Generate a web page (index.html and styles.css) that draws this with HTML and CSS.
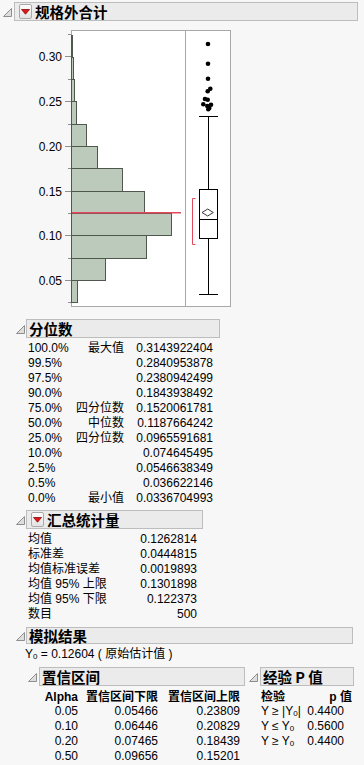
FILE: index.html
```html
<!doctype html>
<html lang="zh-CN">
  <head>
    <meta charset="UTF-8" />
    <meta name="viewport" content="width=device-width, initial-scale=1.0" />
    <title>规格外合计</title>
    <link rel="stylesheet" href="styles.css">
  </head>
  <body>
    <div class="report">
      <!-- 顶层报告 -->
      <div class="outline-row row-top">
        <svg class="disclosure" viewBox="0 0 9 9"><polygon points="0.5,8.5 8.5,0.5 8.5,8.5" /></svg>
        <div class="outline-head head-top">
          <span class="menu-btn"><svg viewBox="0 0 9 6"><polygon points="0.5,0.5 8.5,0.5 4.5,5.2" /></svg></span>
          <span>规格外合计</span>
        </div>
      </div>

      <svg class="dist-chart" width="240" height="293" viewBox="0 21 240 293">
        <rect class="frame" x="71.5" y="30.5" width="159" height="276" />
        <line class="frame" x1="185.5" y1="30.5" x2="185.5" y2="306.5" />

        <g class="bars">
          <rect x="71.5" y="35.5" width="1" height="22" />
          <rect x="71.5" y="57.5" width="2" height="22" />
          <rect x="71.5" y="79.5" width="3" height="22" />
          <rect x="71.5" y="101.5" width="5" height="23" />
          <rect x="71.5" y="124.5" width="15" height="22" />
          <rect x="71.5" y="146.5" width="26" height="22" />
          <rect x="71.5" y="168.5" width="51" height="23" />
          <rect x="71.5" y="191.5" width="73" height="22" />
          <rect x="71.5" y="213.5" width="100" height="22" />
          <rect x="71.5" y="235.5" width="75" height="23" />
          <rect x="71.5" y="258.5" width="34" height="22" />
          <rect x="71.5" y="280.5" width="6" height="22" />
        </g>
        <line class="mean" x1="72" y1="212.8" x2="181" y2="212.8" />

        <g class="ticks">
          <line x1="65" y1="56.5" x2="71" y2="56.5" />
          <line x1="65" y1="101.5" x2="71" y2="101.5" />
          <line x1="65" y1="146.5" x2="71" y2="146.5" />
          <line x1="65" y1="191.5" x2="71" y2="191.5" />
          <line x1="65" y1="235.5" x2="71" y2="235.5" />
          <line x1="65" y1="280.5" x2="71" y2="280.5" />
          <line x1="68" y1="34.5" x2="71" y2="34.5" />
          <line x1="68" y1="79.5" x2="71" y2="79.5" />
          <line x1="68" y1="124.5" x2="71" y2="124.5" />
          <line x1="68" y1="168.5" x2="71" y2="168.5" />
          <line x1="68" y1="213.5" x2="71" y2="213.5" />
          <line x1="68" y1="258.5" x2="71" y2="258.5" />
          <line x1="68" y1="302.5" x2="71" y2="302.5" />
        </g>
        <g class="tick-labels">
          <text x="62" y="61">0.30</text>
          <text x="62" y="106">0.25</text>
          <text x="62" y="151">0.20</text>
          <text x="62" y="196">0.15</text>
          <text x="62" y="240">0.10</text>
          <text x="62" y="285">0.05</text>
        </g>

        <!-- 箱线图 -->
        <g class="box">
          <line x1="208.5" y1="116.5" x2="208.5" y2="189.5" />
          <line x1="208.5" y1="238.5" x2="208.5" y2="294.5" />
          <line x1="199" y1="116.5" x2="218" y2="116.5" />
          <line x1="199" y1="294.5" x2="218" y2="294.5" />
          <rect x="199.5" y="189.5" width="18" height="49" />
          <line x1="199.5" y1="219.5" x2="217.5" y2="219.5" />
          <polygon class="diamond" points="202,212.5 207.7,209 213.3,212.5 207.7,216" />
        </g>
        <path class="shortest" d="M195.5,198.5 H192.5 V244.5 H195.5" />
        <g class="outliers">
          <circle cx="208" cy="44" r="2.3" />
          <circle cx="208" cy="63.7" r="2.3" />
          <circle cx="208" cy="78.7" r="2.3" />
          <circle cx="210.3" cy="88.7" r="2.3" />
          <circle cx="207.7" cy="91.3" r="2.3" />
          <circle cx="205" cy="99" r="2.3" />
          <circle cx="207.7" cy="99.7" r="2.3" />
          <circle cx="203.3" cy="104.3" r="2.3" />
          <circle cx="211" cy="104.7" r="2.3" />
          <circle cx="207.3" cy="106" r="2.3" />
          <circle cx="209.3" cy="108" r="2.3" />
          <circle cx="208.3" cy="109.3" r="2.3" />
        </g>
      </svg>

      <!-- 分位数 -->
      <div class="outline-row row-sub row-quantiles">
        <svg class="disclosure" viewBox="0 0 9 9"><polygon points="0.5,8.5 8.5,0.5 8.5,8.5" /></svg>
        <div class="outline-head head-quantiles">分位数</div>
      </div>
      <div class="quantiles">
        <span>100.0%</span><span class="r">最大值</span><span class="r">0.3143922404</span>
        <span>99.5%</span><span></span><span class="r">0.2840953878</span>
        <span>97.5%</span><span></span><span class="r">0.2380942499</span>
        <span>90.0%</span><span></span><span class="r">0.1843938492</span>
        <span>75.0%</span><span class="r">四分位数</span><span class="r">0.1520061781</span>
        <span>50.0%</span><span class="r">中位数</span><span class="r">0.1187664242</span>
        <span>25.0%</span><span class="r">四分位数</span><span class="r">0.0965591681</span>
        <span>10.0%</span><span></span><span class="r">0.074645495</span>
        <span>2.5%</span><span></span><span class="r">0.0546638349</span>
        <span>0.5%</span><span></span><span class="r">0.036622146</span>
        <span>0.0%</span><span class="r">最小值</span><span class="r">0.0336704993</span>
      </div>

      <!-- 汇总统计量 -->
      <div class="outline-row row-sub row-summary">
        <svg class="disclosure" viewBox="0 0 9 9"><polygon points="0.5,8.5 8.5,0.5 8.5,8.5" /></svg>
        <div class="outline-head head-summary">
          <span class="menu-btn"><svg viewBox="0 0 9 6"><polygon points="0.5,0.5 8.5,0.5 4.5,5.2" /></svg></span>
          <span>汇总统计量</span>
        </div>
      </div>
      <div class="summary">
        <span>均值</span><span class="r">0.1262814</span>
        <span>标准差</span><span class="r">0.0444815</span>
        <span>均值标准误差</span><span class="r">0.0019893</span>
        <span>均值 95% 上限</span><span class="r">0.1301898</span>
        <span>均值 95% 下限</span><span class="r">0.122373</span>
        <span>数目</span><span class="r">500</span>
      </div>

      <!-- 模拟结果 -->
      <div class="outline-row row-sub row-sim">
        <svg class="disclosure" viewBox="0 0 9 9"><polygon points="0.5,8.5 8.5,0.5 8.5,8.5" /></svg>
        <div class="outline-head head-sim">模拟结果</div>
      </div>
      <p class="y0-line">Y<span class="sub">0</span> = 0.12604 ( 原始估计值 )</p>

      <div class="sim-body">
        <div class="ci-block">
          <div class="outline-row row-ci">
            <svg class="disclosure" viewBox="0 0 9 9"><polygon points="0.5,8.5 8.5,0.5 8.5,8.5" /></svg>
            <div class="outline-head head-ci">置信区间</div>
          </div>
          <div class="ci-table">
            <span class="th">Alpha</span><span class="th">置信区间下限</span><span class="th">置信区间上限</span>
            <span>0.05</span><span>0.05466</span><span>0.23809</span>
            <span>0.10</span><span>0.06446</span><span>0.20829</span>
            <span>0.20</span><span>0.07465</span><span>0.18439</span>
            <span>0.50</span><span>0.09656</span><span>0.15201</span>
          </div>
        </div>

        <div class="p-block">
          <div class="outline-row">
            <svg class="disclosure" viewBox="0 0 9 9"><polygon points="0.5,8.5 8.5,0.5 8.5,8.5" /></svg>
            <div class="outline-head head-p">经验 P 值</div>
          </div>
          <div class="p-table">
            <span class="th">检验</span><span class="th r">p 值</span>
            <span>Y ≥ |Y<span class="sub">0</span>|</span><span class="pv">0.4400</span>
            <span>Y ≤ Y<span class="sub">0</span></span><span class="pv">0.5600</span>
            <span>Y ≥ Y<span class="sub">0</span></span><span class="pv">0.4400</span>
          </div>
        </div>
      </div>
    </div>
  </body>
</html>
```

FILE: styles.css
```css
:root {
  --page-bg: #f7f7f7;
  --head-bg: #ebebeb;
  --head-border: #bdbdbd;
  --frame: #a8a8a8;
  --bar-fill: #bbcabb;
  --bar-line: #4f574f;
  --mark-red: #e24a5c;
}

* {
  box-sizing: border-box;
  margin: 0;
  padding: 0;
}

body {
  background: var(--page-bg);
  color: #000;
  font-family: "Liberation Sans", "Noto Sans CJK SC", sans-serif;
  font-size: 12px;
  line-height: 15px;
}

.report {
  padding-top: 2px;
}

/* outline 标题 */
.outline-row {
  display: flex;
  align-items: center;
}

.disclosure {
  width: 9px;
  height: 9px;
  flex: none;
  margin-top: 2px;
  margin-right: 1px;
}

.disclosure polygon {
  fill: #dedede;
  stroke: #8e8e8e;
  stroke-width: 1;
}

.outline-head {
  display: flex;
  align-items: center;
  height: 19px;
  padding-left: 2px;
  border: 1px solid var(--head-border);
  background: var(--head-bg);
  font-family: "Noto Sans CJK SC", "Liberation Sans", sans-serif;
  font-size: 14.5px;
  font-weight: 700;
  line-height: 17px;
  white-space: nowrap;
}

.menu-btn {
  display: flex;
  align-items: center;
  justify-content: center;
  width: 13px;
  height: 15px;
  margin-left: 2px;
  margin-right: 3px;
  border: 1px solid #a9a9a9;
  border-radius: 2px;
  background: linear-gradient(#fdfdfd, #e2e2e2);
}

.menu-btn svg {
  width: 9px;
  height: 6px;
}

.menu-btn polygon {
  fill: #e01515;
  stroke: #8c0a0a;
  stroke-width: 0.8;
}

.row-top {
  padding-left: 3px;
}

.row-top .disclosure {
  margin-right: 2px;
}

.head-top {
  width: 344px;
}

.row-sub {
  padding-left: 16px;
}

.head-quantiles {
  width: 194px;
}

.head-summary {
  width: 177px;
}

.head-sim {
  width: 327px;
  height: 17px;
}

/* 分布图 */
.dist-chart {
  display: block;
}

.dist-chart .frame {
  fill: #fff;
  stroke: var(--frame);
}

.bars rect {
  fill: var(--bar-fill);
  stroke: var(--bar-line);
}

.mean {
  stroke: var(--mark-red);
  stroke-width: 1.4;
}

.ticks line {
  stroke: #8f8f8f;
}

.tick-labels text {
  font-family: "Liberation Sans", sans-serif;
  font-size: 12px;
  text-anchor: end;
  fill: #000;
}

.box line,
.box rect {
  stroke: #000;
  fill: #fff;
}

.box .diamond {
  fill: #fff;
  stroke: #222;
  stroke-width: 0.9;
}

.shortest {
  fill: none;
  stroke: var(--mark-red);
}

.outliers circle {
  fill: #000;
}

/* 表格 */
.r {
  text-align: right;
}

.row-quantiles {
  margin-top: 5px;
}

.quantiles {
  display: grid;
  grid-template-columns: 48px 48px 89px;
  margin: 3px 0 0 28px;
  white-space: nowrap;
}

.row-summary {
  margin-top: 4px;
}

.summary {
  display: grid;
  grid-template-columns: 100px 69px;
  margin: 3px 0 0 28px;
  white-space: nowrap;
}

.row-sim {
  margin-top: 5px;
}

.y0-line {
  margin: 3px 0 0 25px;
}

.sub {
  font-size: 8px;
  vertical-align: -1px;
}

.sim-body {
  display: flex;
  margin-top: 3px;
}

.row-ci {
  padding-left: 28px;
}

.row-ci .disclosure,
.p-block .disclosure {
  margin-right: 2px;
}

.head-ci {
  width: 206px;
}

.ci-table {
  display: grid;
  grid-template-columns: 39px 80px 82px;
  grid-auto-rows: 15px;
  margin: 3px 0 0 39px;
  text-align: right;
  white-space: nowrap;
}

.th {
  font-weight: 700;
  height: 17px;
  line-height: 17px;
}

.ci-table .th {
  margin-bottom: 2px;
}

.p-block {
  margin-left: 4px;
}

.head-p {
  width: 94px;
}

.p-table {
  display: grid;
  grid-template-columns: 45px 46px;
  grid-auto-rows: 15px;
  margin: 3px 0 0 12px;
  white-space: nowrap;
}

.p-table .th {
  margin-bottom: 2px;
}

.pv {
  text-align: right;
  padding-right: 8px;
}
```
